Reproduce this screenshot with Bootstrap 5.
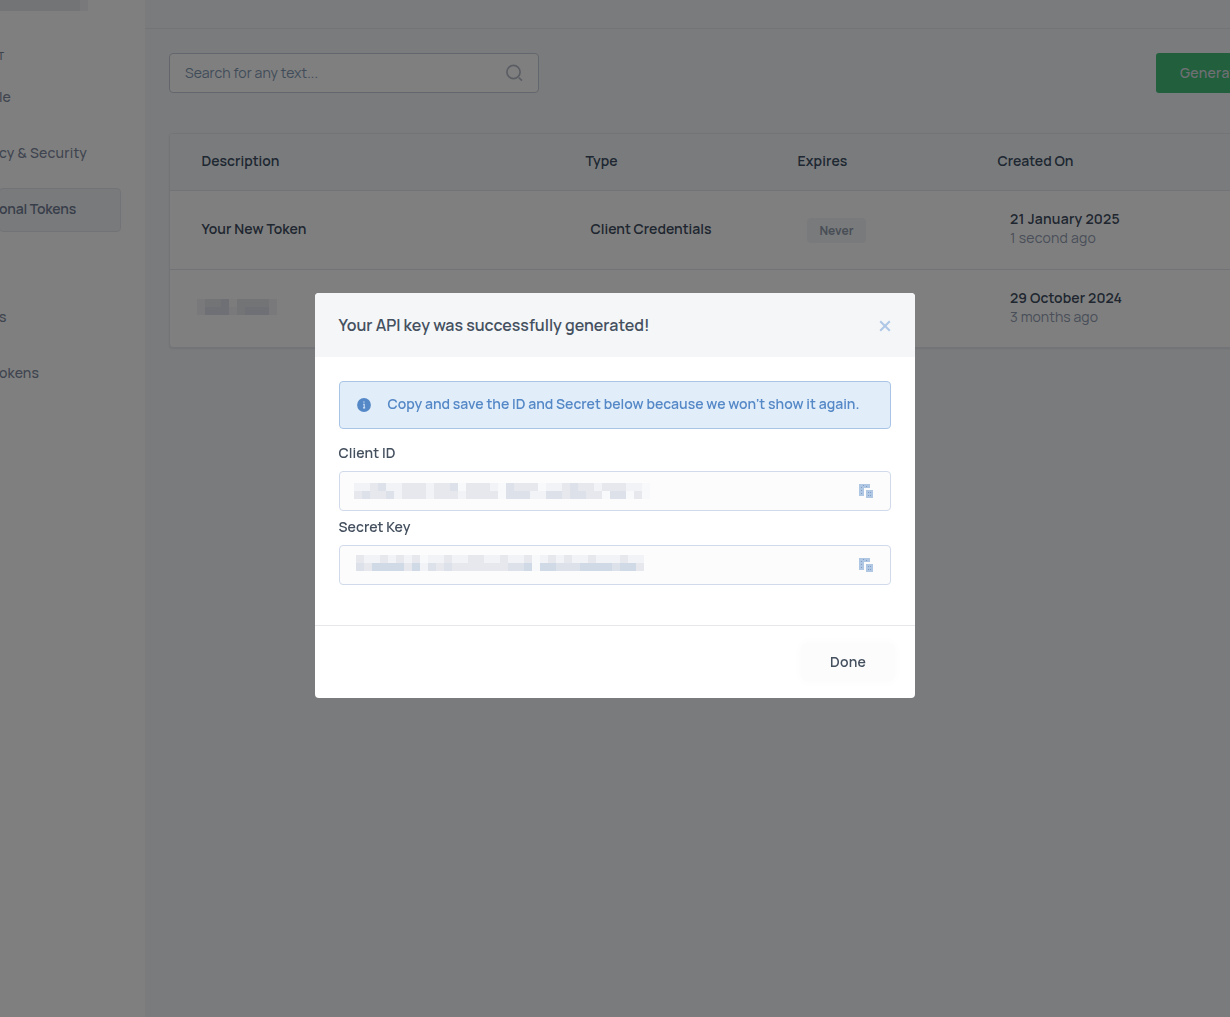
<!DOCTYPE html>
<html lang="en">
<head>
  <meta charset="UTF-8">
  <title>Personal Tokens</title>
  <meta name="viewport" content="width=device-width, initial-scale=1">

  <!-- Bootstrap 5 CSS -->
  <link href="https://cdn.jsdelivr.net/npm/bootstrap@5.3.2/dist/css/bootstrap.min.css" rel="stylesheet">

  <style>
    body {
      font-family: Manrope, Inter, sans-serif;
      font-size: 14px;
      line-height: 20px;
      color: #45536a;
      background: #f5f7fa;
      height: 1017px;
      overflow: hidden;
    }

    /* sidebar */
    .side { width: 145px; background: #fff; height: 1017px; }
    .side-top { height: 48px; }
    .side-title { font-size: 10px; line-height: 16px; height: 28px; color: #7b879d; font-weight: 600; margin-left: -2px; }
    .side-link {
      height: 44px;
      width: 122px;
      margin: 0 0 12px -1px;
      padding-bottom: 2px;
      border: 1px solid transparent;
      border-radius: 4px;
      color: #7f8aa0;
      font-weight: 500;
      white-space: nowrap;
    }
    .side-link .fit { margin-left: -1px; }
    .side-link.current { background: #f3f5f8; border-color: #e3e7ed; color: #717d94; font-weight: 600; }
    .side-gap { height: 52px; }

    /* page */
    .topline { height: 29px; border-bottom: 1px solid #e4e8ed; }
    .toolbar { height: 40px; margin: 24px 0 40px; }
    .search-box { width: 370px; background: #fff; border: 1px solid #c6cdd8; border-radius: 4px; padding: 0 15px; color: #8399b3; }
    .btn-generate { background: #42be7b; color: #e0e0e8; width: 190px; margin-right: -116px; border-radius: 3px; padding: 0 23px 2px; font-size: 14px; font-weight: 500; text-align: left; }
    .token-card { width: 1300px; border: 1px solid #e6e9ee; border-radius: 4px; overflow: hidden; background: #fff; box-shadow: 0 1px 2px #dfe3e9; }
    .token-table { table-layout: fixed; margin: 0; font-size: 14px; }
    .token-table th, .token-table td { padding: 0 0 2px 31.5px; border-color: #e3e7ec; vertical-align: middle; color: #404c60; font-weight: 600; }
    .token-table th { height: 56px; background: #f5f7fa; color: #3c4f64; }
    .token-table td { height: 79px; }
    .token-table tr:last-child td { border-bottom: 0; height: 78px; }
    .token-table td.in-type { padding-left: 36.5px; }
    .token-table td.in-exp { padding-left: 41px; }
    .token-table td.in-date { padding-left: 44px; padding-bottom: 4px; line-height: 19px; }
    .token-table tr:last-child td.in-date { padding-bottom: 2px; }
    .token-table .ago { color: #929db2; font-weight: 400; }
    .never { display: inline-block; background: #f3f5f8; border-radius: 4px; color: #919cad; font-size: 12px; font-weight: 700; width: 59px; line-height: 25px; text-align: center; margin-top: 3px; }

    /* modal */
    .modal-dialog { width: 600px; max-width: 600px; margin: 293px auto 0; }
    .modal-content { border: 0; border-radius: 4px; overflow: hidden; color: #45505f; height: 405px; }
    .modal-header { height: 64px; background: #f4f6f8; border: 0; padding: 0 24px 0 23.5px; border-radius: 0; }
    .modal-title { font-size: 16px; line-height: 24px; font-weight: 600; color: #45505f; }
    .modal-body { padding: 24px; }
    .notice { height: 48px; background: #e1edf9; border: 1px solid #a9c5e6; border-radius: 4px; color: #5588c7; padding: 0 17px; margin: 0; font-weight: 600; }
    .notice .fit { padding-bottom: 2px; margin-left: .5px; }
    .key-label { line-height: 20px; margin: 14px 0 8px -.5px; font-weight: 600; }
    .key-label + .key-box + .key-label { margin-top: 6px; }
    .key-box { height: 40px; background: #fcfcfd; border: 1px solid #d0daea; border-radius: 4px; padding: 0 16px 0 14px; }
    .modal-footer { height: 73px; padding: 0 20px; border-color: #e5e7ea; }
    .modal-footer > * { margin: 0; }
    .btn-done { width: 94px; height: 38px; padding-bottom: 8px; font-size: 14px; font-weight: 600; color: #45505f; background: #fcfcfd; box-shadow: 0 0 8px 2px #fcfcfd; border: 0; }
    .modal-backdrop { --bs-backdrop-opacity: .5; width: 100%; }
    svg { flex: none; display: block; }
    .fit { white-space: nowrap; }
  </style>
</head>
<body>

<div class="d-flex">
  <aside class="side flex-shrink-0">
    <div class="side-top"><svg class="mosaic" data-rows="22222222221|22222222221" width="90" height="11"></svg></div>
    <div class="side-title">T</div>
    <nav>
      <div class="side-link d-flex align-items-center"><span class="fit" data-w="12">le</span></div>
      <div class="side-link d-flex align-items-center"><span class="fit" data-w="88">cy &amp; Security</span></div>
      <div class="side-link current d-flex align-items-center"><span class="fit" data-w="77">onal Tokens</span></div>
      <div class="side-gap"></div>
      <div class="side-link d-flex align-items-center"><span class="fit" data-w="7">s</span></div>
      <div class="side-link d-flex align-items-center"><span class="fit" data-w="40">okens</span></div>
    </nav>
  </aside>

  <main class="flex-grow-1 overflow-hidden">
    <div class="topline"></div>
    <div class="ps-4">
      <div class="toolbar d-flex justify-content-between">
        <div class="search-box d-flex align-items-center justify-content-between">
          <span class="fit" data-w="133">Search for any text...</span>
          <svg width="18" height="18" viewBox="0 0 18 18" fill="none" stroke="#b5bcc8" stroke-width="1.7"><circle cx="8.5" cy="8" r="6.6"/><path d="M13.8 13.6l3.2 3"/></svg>
        </div>
        <button class="btn btn-generate flex-shrink-0"><span class="fit" data-w="64">Generate</span></button>
      </div>

      <div class="token-card">
        <table class="table token-table">
          <colgroup><col width="384"><col width="212"><col width="200"><col></colgroup>
          <thead>
            <tr>
              <th><span class="fit" data-w="78">Description</span></th>
              <th><span class="fit" data-w="32">Type</span></th>
              <th><span class="fit" data-w="50">Expires</span></th>
              <th><span class="fit" data-w="76">Created On</span></th>
            </tr>
          </thead>
          <tbody>
            <tr>
              <td><span class="fit" data-w="105">Your New Token</span></td>
              <td class="in-type"><span class="fit" data-w="121">Client Credentials</span></td>
              <td class="in-exp"><span class="never"><span class="fit" data-w="34">Never</span></span></td>
              <td class="in-date"><span class="fit" data-w="110">21 January 2025</span><br><span class="fit ago" data-w="86">1 second ago</span></td>
            </tr>
            <tr>
              <td style="padding-left:27px"><svg class="mosaic" data-rows="1223022221|1333123331" width="80" height="16"></svg></td>
              <td></td>
              <td></td>
              <td class="in-date"><span class="fit" data-w="112">29 October 2024</span><br><span class="fit ago" data-w="88">3 months ago</span></td>
            </tr>
          </tbody>
        </table>
      </div>
    </div>
  </main>
</div>

<div class="modal-backdrop show"></div>

<!-- Modal -->
<div class="modal d-block overflow-hidden" tabindex="-1" aria-labelledby="keyModalLabel">
  <div class="modal-dialog">
    <div class="modal-content">
      <div class="modal-header">
        <h5 class="modal-title" id="keyModalLabel"><span class="fit" data-w="311">Your API key was successfully generated!</span></h5>
        <svg width="12" height="12" viewBox="0 0 12 12" stroke="#aec7e6" stroke-width="2" style="margin-top:2px"><path d="M1.2 1.2l9.6 9.6M10.8 1.2L1.2 10.8"/></svg>
      </div>
      <div class="modal-body">
        <div class="notice d-flex align-items-center">
          <svg class="me-3" width="14" height="14" viewBox="0 0 14 14"><circle cx="7" cy="7" r="6.9" fill="#5588c7"/><path d="M6.2 4h1.4M6.2 6.4h1v3.4M6 9.9h2.2" stroke="#cfe0f4" stroke-width="1.1" fill="none"/></svg>
          <span class="fit" data-w="472">Copy and save the ID and Secret below because we won't show it again.</span>
        </div>
        <div class="key-label"><span class="fit" data-w="57">Client ID</span></div>
        <div class="key-box d-flex align-items-center justify-content-between">
          <svg class="mosaic" data-rows="1123112221223022210322201123221222110|2322312221222122220333113323322033020" width="296" height="16"></svg>
          <svg width="15" height="14" viewBox="0 0 15 14" fill="#b0c7e4"><path d="M0 0h11v4H5v8H0z"/><path d="M7 6h7v8H7z"/><path d="M2 3h1v1H2zM4 1h1v1H4zM7 2h1v1H7zM2 6h1v1H2zM2 9h1v1H2zM9 8h1v1H9zM11 8h1v1h-1zM9 11h1v1H9zM11 11h1v1h-1z" fill="#7f9fca"/></svg>
        </div>
        <div class="key-label"><span class="fit" data-w="72">Secret Key</span></div>
        <div class="key-box d-flex align-items-center justify-content-between">
          <svg class="mosaic" style="margin:-4px 0 0 2px" data-rows="211212120112112211211201212112111211|324444241323222222233404433344443442" width="288" height="16"></svg>
          <svg width="15" height="14" viewBox="0 0 15 14" fill="#b0c7e4"><path d="M0 0h11v4H5v8H0z"/><path d="M7 6h7v8H7z"/><path d="M2 3h1v1H2zM4 1h1v1H4zM7 2h1v1H7zM2 6h1v1H2zM2 9h1v1H2zM9 8h1v1H9zM11 8h1v1h-1zM9 11h1v1H9zM11 11h1v1h-1z" fill="#7f9fca"/></svg>
        </div>
      </div>
      <div class="modal-footer">
        <button class="btn btn-done"><span class="fit" data-w="36">Done</span></button>
      </div>
    </div>
  </div>
</div>

<!-- Bootstrap 5 JS -->
<script src="https://cdn.jsdelivr.net/npm/bootstrap@5.3.2/dist/js/bootstrap.bundle.min.js"></script>

<script>
  // Hidden values are shown as a mosaic of 8px cells, one digit per shade
  const shades = ["#f8f9fb", "#f2f3f6", "#e6e8ed", "#dce1ea", "#d0d9e6"];

  document.querySelectorAll(".mosaic").forEach(svg => {
    let cells = "";
    svg.dataset.rows.split("|").forEach((row, y) => {
      [...row].forEach((n, x) => {
        cells += `<rect x="${x * 8}" y="${y * 8}" width="8" height="8" fill="${shades[n]}"/>`;
      });
    });
    svg.innerHTML = cells;
  });

  // Even out label widths between fonts through the letter spacing
  document.querySelectorAll(".fit[data-w]").forEach(el => {
    const extra = el.dataset.w - el.getBoundingClientRect().width;
    el.style.letterSpacing = `${extra / el.textContent.length}px`;
  });
</script>
</body>
</html>
